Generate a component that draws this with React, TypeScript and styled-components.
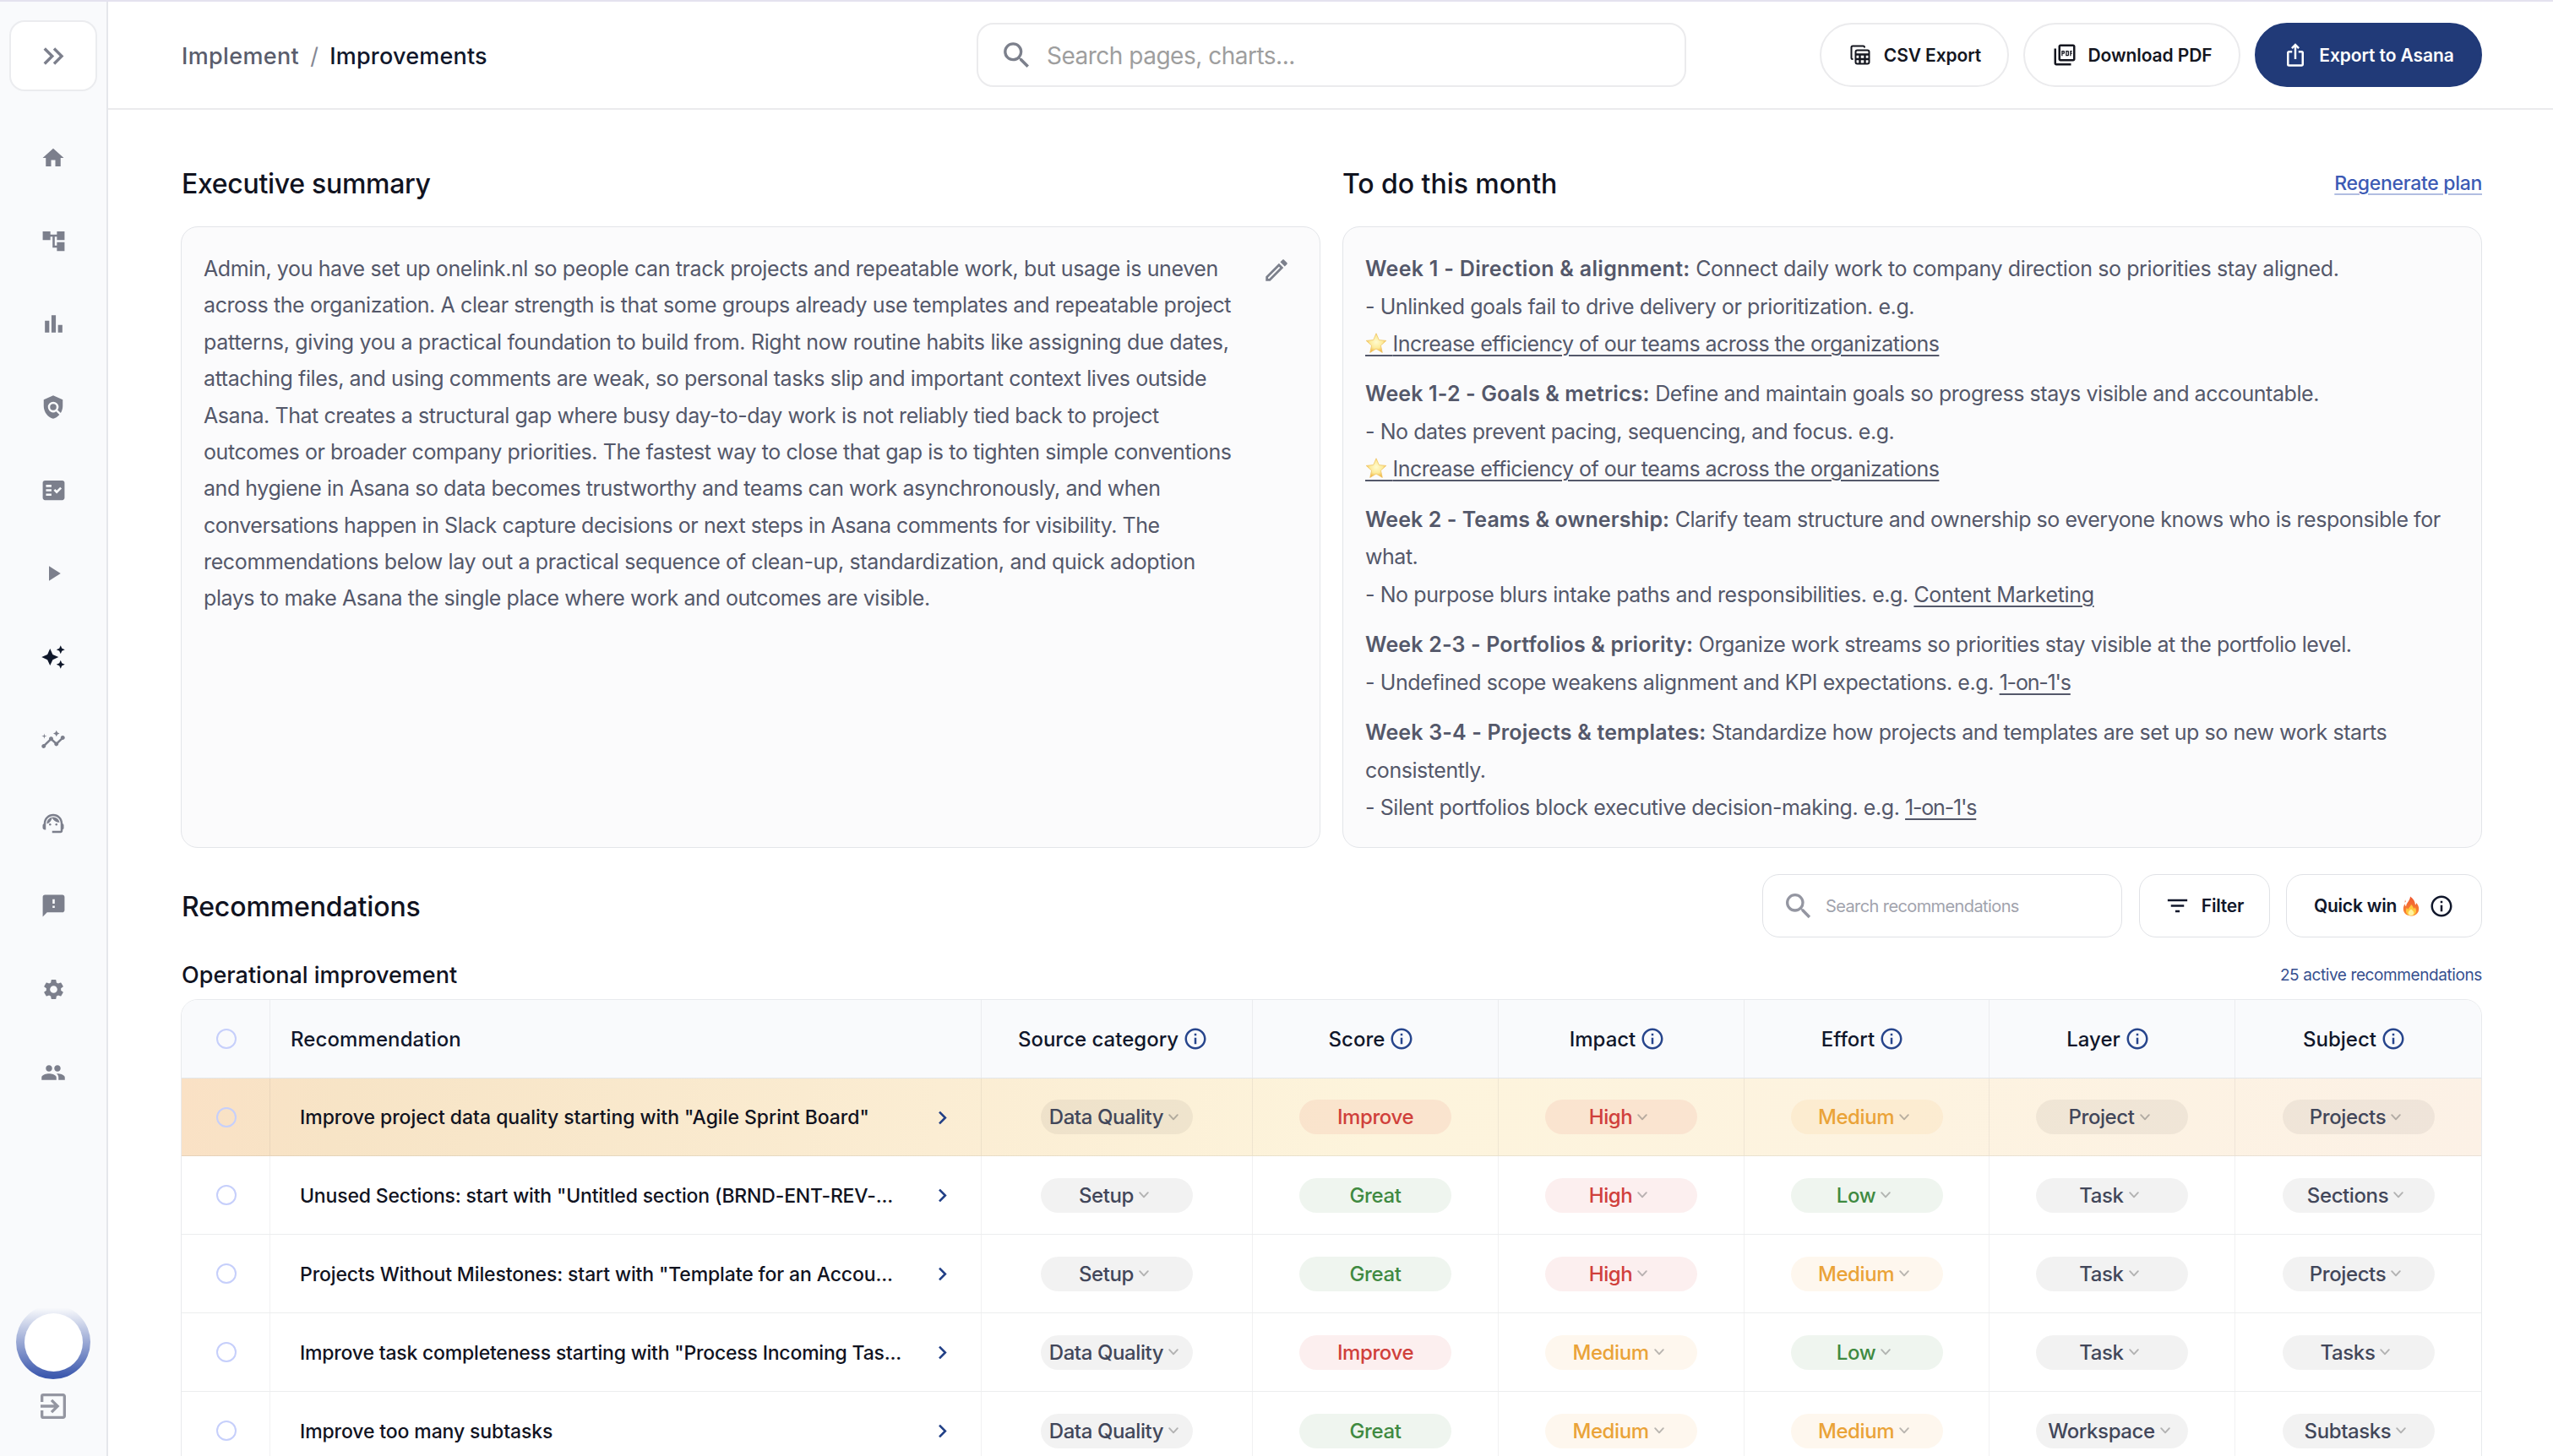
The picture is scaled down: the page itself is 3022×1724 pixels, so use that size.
import type { ReactNode } from 'react';
import styled, { createGlobalStyle, css } from 'styled-components';
import {
    MdAccountTree,
    MdAutoAwesome,
    MdChevronRight,
    MdExitToApp,
    MdFactCheck,
    MdFeedback,
    MdFilterList,
    MdHome,
    MdInfoOutline,
    MdInsights,
    MdKeyboardDoubleArrowRight,
    MdOutlineEdit,
    MdOutlineIosShare,
    MdOutlinePictureAsPdf,
    MdPeople,
    MdPlayArrow,
    MdPolicy,
    MdSearch,
    MdSettings,
    MdSupportAgent
} from 'react-icons/md';

type Tone = 'gray' | 'red' | 'green' | 'orange';

const BarChartIcon = () => (
    <svg viewBox="0 0 24 24" width="31" height="31" fill="currentColor">
        <path d="M4 9h4v11H4zM10 4h4v16h-4zM16 13h4v7h-4z"/>
    </svg>
);

const TableCopyIcon = () => (
    <svg viewBox="0 0 30 30" width="30" height="30" fill="none" stroke="currentColor">
        <path d="M20 6.500V6a1.500 1.500 0 0 0-1.500-1.500H6A1.500 1.500 0 0 0 4.500 6v12.500A1.500 1.500 0 0 0 6 20h.500" strokeWidth="2"/>
        <rect x="9.500" y="9.500" width="16" height="16" rx="2" strokeWidth="2"/>
        <path d="M9 14.500h17M9 20h17M14.500 14.500V26M20.500 14.500V26" strokeWidth="2.400"/>
    </svg>
);

const ChevronDown = () => (
    <svg viewBox="0 0 12 8" width="12" height="8" fill="none" stroke="currentColor" strokeWidth="1.900" strokeLinecap="round" strokeLinejoin="round">
        <path d="M1.200 1.200L6 6.300l4.800-5.100"/>
    </svg>
);

const StarIcon = () => (
    <StyledStar viewBox="0 0 26 24">
        <defs>
            <radialGradient id="star" cx="50%" cy="45%" r="58%">
                <stop offset="0" stopColor="#fffbd0"/>
                <stop offset="0.55" stopColor="#fdeb9a"/>
                <stop offset="1" stopColor="#f0ac35"/>
            </radialGradient>
        </defs>
        <path d="M13 .8l3.300 7.800 8.500.8-6.400 5.700 1.900 8.300L13 19l-7.300 4.400 1.900-8.300L1.200 9.400l8.500-.8z" fill="url(#star)" stroke="#efc566" strokeWidth=".8" strokeLinejoin="round"/>
    </StyledStar>
);

const FlameIcon = () => (
    <svg viewBox="0 0 20 24" width="20" height="24">
        <defs>
            <linearGradient id="flame" x1="0" y1="0" x2="0" y2="1">
                <stop offset="0" stopColor="#ef5a33"/>
                <stop offset="1" stopColor="#fb8a32"/>
            </linearGradient>
        </defs>
        <path d="M9 .5c3.500 2.200 5.800 5.800 6 10 .8-.8 1.200-1.600 1.200-2.600 2 2.300 3 4.600 3 7.300 0 5-4 8.300-9.200 8.300S.8 20.200.8 15.300c0-2.500.9-4.200 1.700-6 .3 1.500.8 2.300 1.600 2.900C4.300 8 8.800 5.500 9 .5z" fill="url(#flame)"/>
        <path d="M3 4.200l.8 2.500-1.300 1z" fill="#f4764a"/>
        <path d="M10 10c2.600 2 2.200 3.800 3.600 5 .5-.5.8-1 .9-1.700 1 1.300 1.500 2.700 1.500 4 0 3.500-2.700 5.900-6 5.900s-6-2.400-6-5.700c0-1.500.5-2.700 1-3.700.4 1 .8 1.500 1.600 1.900C7 13.300 9.800 12.500 10 10z" fill="#ffc93c"/>
        <path d="M10 15.500c1.800 1.600 3.300 2.700 3.300 4.500 0 1.700-1.400 3-3.300 3s-3.300-1.300-3.300-3c0-1.800 1.500-2.900 3.300-4.500z" fill="#fff3a0"/>
    </svg>
);

const navItems: { name: string, icon: ReactNode, active?: boolean }[] = [
    { name: 'home', icon: <MdHome size={30}/> },
    { name: 'structure', icon: <MdAccountTree size={31}/> },
    { name: 'charts', icon: <BarChartIcon/> },
    { name: 'policy', icon: <MdPolicy size={30}/> },
    { name: 'checks', icon: <MdFactCheck size={31}/> },
    { name: 'play', icon: <MdPlayArrow size={30}/> },
    { name: 'improvements', icon: <MdAutoAwesome size={30}/>, active: true },
    { name: 'insights', icon: <MdInsights size={30}/> },
    { name: 'support', icon: <MdSupportAgent size={30}/> },
    { name: 'feedback', icon: <MdFeedback size={31}/> },
    { name: 'settings', icon: <MdSettings size={29}/> },
    { name: 'people', icon: <MdPeople size={30}/> }
];

// each line carries its own letter spacing
const summary: [string, number][] = [
    ['Admin, you have set up onelink.nl so people can track projects and repeatable work, but usage is uneven', -0.38],
    ['across the organization. A clear strength is that some groups already use templates and repeatable project', -0.4],
    ['patterns, giving you a practical foundation to build from. Right now routine habits like assigning due dates,', -0.34],
    ['attaching files, and using comments are weak, so personal tasks slip and important context lives outside', -0.41],
    ['Asana. That creates a structural gap where busy day-to-day work is not reliably tied back to project', -0.44],
    ['outcomes or broader company priorities. The fastest way to close that gap is to tighten simple conventions', -0.42],
    ['and hygiene in Asana so data becomes trustworthy and teams can work asynchronously, and when', -0.45],
    ['conversations happen in Slack capture decisions or next steps in Asana comments for visibility. The', -0.47],
    ['recommendations below lay out a practical sequence of clean-up, standardization, and quick adoption', -0.36],
    ['plays to make Asana the single place where work and outcomes are visible.', -0.43]
];

const weeks = [
    {
        title: 'Week 1 - Direction & alignment:',
        titleTrack: 0.3,
        text: ['Connect daily work to company direction so priorities stay aligned.'],
        track: -0.39,
        note: 'Unlinked goals fail to drive delivery or prioritization. e.g.',
        link: 'Increase efficiency of our teams across the organizations',
        goal: true
    },
    {
        title: 'Week 1-2 - Goals & metrics:',
        titleTrack: 0.14,
        text: ['Define and maintain goals so progress stays visible and accountable.'],
        track: -0.44,
        note: 'No dates prevent pacing, sequencing, and focus. e.g.',
        link: 'Increase efficiency of our teams across the organizations',
        goal: true
    },
    {
        title: 'Week 2 - Teams & ownership:',
        titleTrack: 0.06,
        text: ['Clarify team structure and ownership so everyone knows who is responsible for', 'what.'],
        track: -0.46,
        note: 'No purpose blurs intake paths and responsibilities. e.g.',
        link: 'Content Marketing',
        linkTrack: -0.34
    },
    {
        title: 'Week 2-3 - Portfolios & priority:',
        titleTrack: 0.16,
        text: ['Organize work streams so priorities stay visible at the portfolio level.'],
        track: -0.46,
        note: 'Undefined scope weakens alignment and KPI expectations. e.g.',
        link: "1-on-1's",
        linkTrack: -1.2
    },
    {
        title: 'Week 3-4 - Projects & templates:',
        titleTrack: 0.16,
        text: ['Standardize how projects and templates are set up so new work starts', 'consistently.'],
        track: -0.44,
        note: 'Silent portfolios block executive decision-making. e.g.',
        link: "1-on-1's",
        linkTrack: -1.2
    }
];

const columns = ['Source category', 'Score', 'Impact', 'Effort', 'Layer', 'Subject'];

const rows = [
    { title: 'Improve project data quality starting with "Agile Sprint Board"', track: -0.03, cells: ['Data Quality', 'Improve', 'High', 'Medium', 'Project', 'Projects'] },
    { title: 'Unused Sections: start with "Untitled section (BRND-ENT-REV-...', track: -0.17, cells: ['Setup', 'Great', 'High', 'Low', 'Task', 'Sections'] },
    { title: 'Projects Without Milestones: start with "Template for an Accou...', track: -0.13, cells: ['Setup', 'Great', 'High', 'Medium', 'Task', 'Projects'] },
    { title: 'Improve task completeness starting with "Process Incoming Tas...', track: -0.2, cells: ['Data Quality', 'Improve', 'Medium', 'Low', 'Task', 'Tasks'] },
    { title: 'Improve too many subtasks', track: -0.12, cells: ['Data Quality', 'Great', 'Medium', 'Medium', 'Workspace', 'Subtasks'] }
];

const tones: Record<string, Tone> = {
    Improve: 'red',
    High: 'red',
    Great: 'green',
    Low: 'green',
    Medium: 'orange'
};

const Sidebar = () => (
    <StyledSidebar>
        <StyledExpand><MdKeyboardDoubleArrowRight size={41}/></StyledExpand>
        <StyledNav>
            {navItems.map(item => (
                <StyledNavItem key={item.name} $active={item.active}>{item.icon}</StyledNavItem>
            ))}
        </StyledNav>
        <StyledAvatar/>
        <StyledLeave><MdExitToApp size={40}/></StyledLeave>
    </StyledSidebar>
);

const TopBar = () => (
    <StyledTopBar>
        <StyledCrumbs>
            <span>Implement</span>
            <StyledSlash>/</StyledSlash>
            <StyledCurrent>Improvements</StyledCurrent>
        </StyledCrumbs>
        <StyledSearch>
            <MdSearch size={41}/>
            <span>Search pages, charts...</span>
        </StyledSearch>
        <StyledActions>
            <StyledAction $width={224}><TableCopyIcon/>CSV Export</StyledAction>
            <StyledAction $width={257}><MdOutlinePictureAsPdf size={30}/>Download PDF</StyledAction>
            <StyledAction $width={269} $primary><MdOutlineIosShare size={30}/>Export to Asana</StyledAction>
        </StyledActions>
    </StyledTopBar>
);

const Plan = () => (
    <StyledCard>
        {weeks.map(week => (
            <StyledWeek key={week.title}>
                <StyledPlanLine $track={week.track}>
                    <StyledWeekName $track={week.titleTrack}>{week.title}</StyledWeekName> {week.text[0]}
                </StyledPlanLine>
                {week.text[1] ? <StyledPlanLine $track={week.track}>{week.text[1]}</StyledPlanLine> : ""}
                {week.goal ?
                        <>
                            <StyledPlanLine $track={-0.43}>- {week.note}</StyledPlanLine>
                            <StyledPlanLine $track={-0.43}>
                                <StyledPlanLink $track={-0.53}><StarIcon/> {week.link}</StyledPlanLink>
                            </StyledPlanLine>
                        </>
                    :
                        <StyledPlanLine $track={-0.42}>
                            - {week.note} <StyledPlanLink $track={week.linkTrack}>{week.link}</StyledPlanLink>
                        </StyledPlanLine>
                }
            </StyledWeek>
        ))}
    </StyledCard>
);

const Table = () => (
    <StyledTable>
        <StyledHeadRow>
            <StyledCell><StyledRadio/></StyledCell>
            <StyledNameHead>Recommendation</StyledNameHead>
            {columns.map(name => (
                <StyledCell key={name}>
                    <StyledColumnName>{name}<MdInfoOutline size={30}/></StyledColumnName>
                </StyledCell>
            ))}
        </StyledHeadRow>
        {rows.map((row, r) => (
            <StyledRow key={row.title} $highlight={r === 0}>
                <StyledCell><StyledRadio/></StyledCell>
                <StyledNameCell $track={row.track}>
                    <span>{row.title}</span>
                    <MdChevronRight size={31}/>
                </StyledNameCell>
                {row.cells.map((value, c) => (
                    <StyledCell key={c}>
                        <StyledPill $tone={tones[value] ?? 'gray'}>
                            {value}
                            {c !== 1 ? <StyledPillArrow><ChevronDown/></StyledPillArrow> : ""}
                        </StyledPill>
                    </StyledCell>
                ))}
            </StyledRow>
        ))}
    </StyledTable>
);

const App = () => {
    return (
        <StyledPage>
            <GlobalStyle/>
            <Sidebar/>
            <StyledMain>
                <TopBar/>
                <StyledContent>
                    <StyledOverview>
                        <section>
                            <StyledSectionHead><StyledTitle $track={-0.3}>Executive summary</StyledTitle></StyledSectionHead>
                            <StyledCard>
                                <StyledSummary>
                                    <div>
                                        {summary.map(([line, track]) => (
                                            <StyledSummaryLine key={line} $track={track}>{line}</StyledSummaryLine>
                                        ))}
                                    </div>
                                    <MdOutlineEdit size={34}/>
                                </StyledSummary>
                            </StyledCard>
                        </section>
                        <section>
                            <StyledSectionHead>
                                <StyledTitle $track={-0.05} $flush>To do this month</StyledTitle>
                                <StyledRegenerate>Regenerate plan</StyledRegenerate>
                            </StyledSectionHead>
                            <Plan/>
                        </section>
                    </StyledOverview>

                    <StyledToolbar>
                        <StyledTitle $track={-0.12}>Recommendations</StyledTitle>
                        <StyledTools>
                            <StyledTableSearch><MdSearch size={40}/>Search recommendations</StyledTableSearch>
                            <StyledTool $width={155} $gap={13}><MdFilterList size={31}/>Filter</StyledTool>
                            <StyledTool $width={232} $gap={7}>
                                Quick win
                                <FlameIcon/>
                                <StyledToolInfo><MdInfoOutline size={30}/></StyledToolInfo>
                            </StyledTool>
                        </StyledTools>
                    </StyledToolbar>

                    <StyledTableCaption>
                        <StyledSubtitle>Operational improvement</StyledSubtitle>
                        <StyledCount>25 active recommendations</StyledCount>
                    </StyledTableCaption>
                    <Table/>
                </StyledContent>
            </StyledMain>
        </StyledPage>
    );
}

export default App;

const GlobalStyle = createGlobalStyle`
    * {
        box-sizing: border-box;
    }
    body {
        margin: 0;
        overflow: hidden;
        background: #fff;
        font-family: Inter, 'Liberation Sans', sans-serif;
        color: #11131f;
    }
    svg {
        flex-shrink: 0;
    }
`

const StyledPage = styled.div`
    display: flex;
    height: 1724px;
    overflow: hidden;
    border-top: 2px solid #e4e2ef;
`

const StyledSidebar = styled.aside`
    width: 128px;
    flex-shrink: 0;
    display: flex;
    flex-direction: column;
    align-items: center;
    padding: 22px 0 39px;
    background: #f9fafc;
    border-right: 2px solid #e5e7eb;
`

const StyledExpand = styled.div`
    width: 104px;
    height: 84px;
    display: flex;
    align-items: center;
    justify-content: center;
    background: #fff;
    border: 2px solid #ebecef;
    border-radius: 18px;
    color: #7c7f8c;
`

const StyledNav = styled.nav`
    margin-top: 29.800px;
`

const StyledNavItem = styled.div<{ $active?: boolean }>`
    height: 98.450px;
    display: flex;
    align-items: center;
    justify-content: center;
    color: ${props => props.$active ? '#0f172a' : '#7c7f8c'};
`

const StyledAvatar = styled.div`
    width: 88px;
    height: 88px;
    margin-top: auto;
    padding: 9.500px;
    border-radius: 50%;
    background: linear-gradient(to bottom, #f9fafc 4%, #3d59ae 96%);

    &::after {
        content: '';
        display: block;
        height: 100%;
        border-radius: 50%;
        background: #fff;
    }
`

const StyledLeave = styled.div`
    height: 40px;
    margin-top: 12px;
    color: #9496a1;
`

const StyledMain = styled.div`
    flex: 1;
    min-width: 0;
`

const StyledTopBar = styled.header`
    height: 128px;
    display: grid;
    grid-template-columns: 1fr 840px 1fr;
    align-items: center;
    padding: 0 84px 0 86px;
    border-bottom: 2px solid #ebebed;
`

const StyledCrumbs = styled.div`
    display: flex;
    gap: 13px;
    padding: 3px 0 0 1px;
    font-size: 27px;
    font-weight: 500;
    letter-spacing: 0.350px;
    color: #5a5d6c;
`

const StyledSlash = styled.span`
    font-weight: 400;
    color: #858894;
`

const StyledCurrent = styled.span`
    letter-spacing: 0.2px;
    color: #10172b;
`

const StyledSearch = styled.div`
    height: 76px;
    display: flex;
    align-items: center;
    gap: 15px;
    padding: 1px 0 0 25px;
    border: 2px solid #ebebed;
    border-radius: 20px;
    font-size: 28px;
    letter-spacing: -0.5px;
    color: #9e9e9e;

    svg {
        color: #7c808c;
    }
`

const StyledActions = styled.div`
    display: flex;
    justify-content: flex-end;
    gap: 17px;
`

const StyledAction = styled.button<{ $width: number, $primary?: boolean }>`
    width: ${props => props.$width}px;
    height: 76px;
    display: flex;
    align-items: center;
    justify-content: center;
    gap: 13px;
    padding: 0;
    border: 2px solid ${props => props.$primary ? '#213a78' : '#ebebed'};
    border-radius: 38px;
    background: ${props => props.$primary ? '#213a78' : '#fff'};
    color: ${props => props.$primary ? '#fff' : '#14161f'};
    font-family: inherit;
    font-size: 21px;
    font-weight: 600;
    letter-spacing: -0.1px;
    white-space: nowrap;
`

const StyledContent = styled.main`
    padding: 67px 84px 0 86px;
`

const StyledOverview = styled.div`
    display: grid;
    grid-template-columns: 1fr 1fr;
    gap: 26px;
`

const StyledSectionHead = styled.div`
    height: 40px;
    display: flex;
    align-items: center;
    justify-content: space-between;
    margin-bottom: 31px;
`

const StyledTitle = styled.h2<{ $track: number, $flush?: boolean }>`
    margin: 0;
    padding: 1px 0 0 ${props => props.$flush ? 0 : 1}px;
    font-size: 32px;
    font-weight: 500;
    letter-spacing: ${props => props.$track}px;
    color: #11131f;
`

const StyledRegenerate = styled.a`
    font-size: 23px;
    font-weight: 500;
    letter-spacing: -0.3px;
    color: #3c5ab4;
    text-decoration: underline 2px rgba(60, 90, 180, 0.4);
    text-underline-offset: 4px;
`

const StyledCard = styled.div`
    height: 736px;
    padding: 27px 26px 0;
    background: #fbfbfc;
    border: 1px solid #e3e5e9;
    border-radius: 20px;
`

const StyledSummary = styled.div`
    display: flex;
    justify-content: space-between;
    align-items: flex-start;
    padding: 1px 8px 0 0;

    svg {
        margin-top: 6px;
        color: #7c808c;
    }
`

const planText = css<{ $track: number }>`
    font-size: 25px;
    letter-spacing: ${props => props.$track}px;
    white-space: nowrap;
    color: #54586a;
`

const StyledSummaryLine = styled.div<{ $track: number }>`
    ${planText}
    line-height: 43.370px;
`

const StyledWeek = styled.div`
    margin-bottom: 14.900px;
`

const StyledPlanLine = styled.div<{ $track: number }>`
    ${planText}
    height: 44.500px;
    line-height: 44.500px;
`

const StyledWeekName = styled.strong<{ $track: number }>`
    font-weight: 600;
    letter-spacing: ${props => props.$track}px;
`

const StyledPlanLink = styled.a<{ $track?: number }>`
    letter-spacing: ${props => props.$track ?? -0.4}px;
    text-decoration: underline 2px;
    text-underline-offset: 4px;
`

// the link underline does not run below an inline svg, so the star draws its own
const StyledStar = styled.svg`
    box-sizing: content-box;
    width: 26px;
    height: 24px;
    padding-bottom: 2.500px;
    border-bottom: 2px solid #54586a;
    vertical-align: -6px;
`

const StyledToolbar = styled.div`
    height: 75px;
    display: flex;
    align-items: center;
    justify-content: space-between;
    margin-top: 31px;
`

const StyledTools = styled.div`
    display: flex;
    gap: 19.500px;
`

const StyledTool = styled.div<{ $width: number, $gap: number }>`
    width: ${props => props.$width}px;
    height: 75px;
    display: flex;
    align-items: center;
    justify-content: center;
    gap: ${props => props.$gap}px;
    border: 1px solid #e0e2e6;
    border-radius: 20px;
    font-size: 21px;
    font-weight: 600;
    letter-spacing: -0.2px;
    color: #10172b;
`

const StyledToolInfo = styled.span`
    display: flex;
    margin-left: 4px;
`

const StyledTableSearch = styled(StyledTool).attrs({ $width: 426, $gap: 12 })`
    justify-content: flex-start;
    padding-left: 22px;
    font-size: 20px;
    font-weight: 400;
    letter-spacing: -0.6px;
    color: #a1a3ad;

    svg {
        color: #9496a1;
    }
`

const StyledTableCaption = styled.div`
    height: 40px;
    display: flex;
    align-items: center;
    justify-content: space-between;
    margin: 24px 0 9px;
`

const StyledSubtitle = styled.h3`
    margin: 0;
    padding-left: 1px;
    font-size: 27px;
    font-weight: 500;
    color: #11131f;
`

const StyledCount = styled.span`
    font-size: 19px;
    letter-spacing: -0.4px;
    color: #37508f;
`

const StyledTable = styled.div`
    border: 1px solid #e8eaed;
    border-radius: 20px 20px 0 0;
    overflow: hidden;
`

const StyledRow = styled.div<{ $highlight?: boolean }>`
    height: ${props => props.$highlight ? 92 : 93}px;
    display: grid;
    grid-template-columns: 105px 842px 321px 291px 291px 290px 291px 1fr;
    border-bottom: 1px solid rgba(15, 23, 42, 0.08);
    background: ${props => props.$highlight ?
        'linear-gradient(100deg, #fae1c5 0%, #f7e4c6 7%, #fbedd3 33%, #fdf4dc 52%, #fdf3e0 75%, #fcf1e6 100%)' : '#fff'};
`

const StyledHeadRow = styled(StyledRow)`
    background: #f9fafc;
    border-bottom-color: #e3e6ea;
`

const StyledCell = styled.div`
    display: flex;
    align-items: center;
    justify-content: center;
    border-right: 1px solid rgba(15, 23, 42, 0.06);

    &:last-child {
        border-right: none;
    }
`

const StyledRadio = styled.span`
    width: 24px;
    height: 24px;
    margin-left: 1px;
    border: 2.500px solid #c6cffb;
    border-radius: 50%;
`

const StyledColumnName = styled.span`
    display: flex;
    align-items: center;
    gap: 5px;
    margin-right: 9px;
    font-size: 24px;
    font-weight: 500;
    color: #10172b;

    svg {
        color: #27458c;
    }
`

const StyledNameHead = styled(StyledCell)`
    justify-content: flex-start;
    padding-left: 24px;
    font-size: 24px;
    font-weight: 500;
    letter-spacing: 0.1px;
    color: #10172b;
`

const StyledNameCell = styled(StyledCell)<{ $track: number }>`
    justify-content: space-between;
    padding: 1px 30px 0 35px;
    font-size: 23px;
    font-weight: 500;
    letter-spacing: ${props => props.$track}px;
    white-space: nowrap;

    svg {
        color: #213f86;
    }
`

const pillColors: Record<Tone, string> = {
    gray: 'color: #42475a; background: rgba(0, 0, 0, 0.05);',
    red: 'color: #d0403b; background: rgba(211, 47, 47, 0.08);',
    green: 'color: #3f8a41; background: rgba(46, 125, 50, 0.08);',
    orange: 'color: #eaa338; background: rgba(245, 150, 40, 0.08);'
};

const StyledPill = styled.span<{ $tone: Tone }>`
    width: 180px;
    height: 41px;
    display: flex;
    align-items: center;
    justify-content: center;
    border-radius: 21px;
    font-size: 24px;
    font-weight: 500;
    letter-spacing: -0.4px;
    white-space: nowrap;
    ${props => pillColors[props.$tone]}
`

const StyledPillArrow = styled.span`
    display: flex;
    margin: 0 7px 0 6px;
    color: rgba(90, 90, 90, 0.42);
`
